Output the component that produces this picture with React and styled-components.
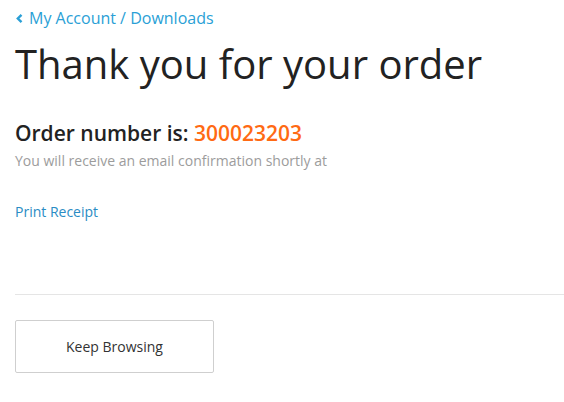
import React from "react";
import styled, { createGlobalStyle } from "styled-components";

const Global = createGlobalStyle`
  html, body { margin: 0; padding: 0; background: #fff; }
  body { font-family: "Open Sans", sans-serif; }
`;

const Page = styled.div`
  padding: 6px 0 0 15px;
  display: flex;
  flex-direction: column;
`;

const Breadcrumb = styled.a`
  display: flex;
  align-items: center;
  gap: 5px;
  color: #2a9fd6;
  font-size: 16px;
  line-height: 24px;
  text-decoration: none;
`;

const Title = styled.h1`
  margin: 9px 0 0;
  font-size: 40px;
  font-weight: 400;
  line-height: 50px;
  color: #222;
`;

const OrderLine = styled.h2`
  margin: 30px 0 0;
  font-size: 21px;
  font-weight: 600;
  line-height: 28px;
  color: #222;
`;

const OrderNumber = styled.span`
  color: #ff6a13;
`;

const Note = styled.p`
  margin: 4px 0 0;
  font-size: 14px;
  line-height: 20px;
  color: #9c9c9c;
`;

const Link = styled.a`
  margin-top: 31px;
  font-size: 14px;
  line-height: 20px;
  color: #2a8cc4;
  text-decoration: none;
`;

const Divider = styled.hr`
  margin: 72px 0 0;
  border: 0;
  border-top: 1px solid #e5e5e5;
`;

const Button = styled.button`
  margin-top: 25px;
  width: 199px;
  height: 53px;
  background: #fff;
  border: 1px solid #cfcfcf;
  border-radius: 2px;
  font-family: "Open Sans", sans-serif;
  font-size: 14px;
  color: #333;
`;

export default function App() {
  return (
    <>
      <Global />
      <Page>
        <Breadcrumb href="#">
          <svg width="9" height="11" viewBox="0 0 9 11">
            <path d="M6.5 1.8 L2.8 5.5 L6.5 9.2" fill="none" stroke="#2a9fd6" strokeWidth="2.4" />
          </svg>
          My Account / Downloads
        </Breadcrumb>
        <Title>Thank you for your order</Title>
        <OrderLine>
          Order number is: <OrderNumber>300023203</OrderNumber>
        </OrderLine>
        <Note>You will receive an email confirmation shortly at</Note>
        <Link href="#">Print Receipt</Link>
        <Divider />
        <Button>Keep Browsing</Button>
      </Page>
    </>
  );
}
